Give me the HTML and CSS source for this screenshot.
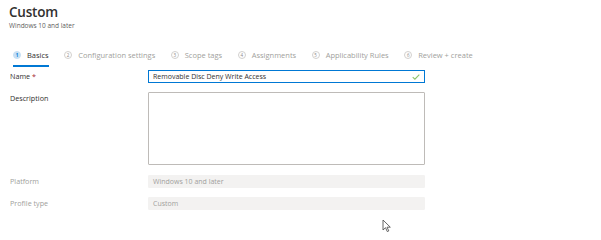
FILE: index.html
```html
<!DOCTYPE html>
<html lang="en">
<head>
    <meta charset="UTF-8">
    <title>Custom</title>
    <link rel="stylesheet" href="styles.css">
</head>
<body>

<div class="page">
    <div class="header">
        <h1 class="title">Custom</h1>
        <div class="subtitle">Windows 10 and later</div>
    </div>

    <!-- Wizard steps -->
    <div class="steps">
        <div class="step active"><span class="num">1</span><span class="label">Basics</span></div>
        <div class="step"><span class="num">2</span><span class="label">Configuration settings</span></div>
        <div class="step"><span class="num">3</span><span class="label">Scope tags</span></div>
        <div class="step"><span class="num">4</span><span class="label">Assignments</span></div>
        <div class="step"><span class="num">5</span><span class="label">Applicability Rules</span></div>
        <div class="step"><span class="num">6</span><span class="label">Review + create</span></div>
    </div>

    <div class="form">
        <div class="row">
            <div class="field-label">Name <span class="req">*</span></div>
            <div class="input focused">
                <span>Removable Disc Deny Write Access</span>
                <svg class="check" width="8" height="6" viewBox="0 0 8 6"><path d="M0.7 3.2 L2.9 5.2 L7.3 0.7" fill="none" stroke="#8cc46a" stroke-width="1.1"/></svg>
            </div>
        </div>
        <div class="row">
            <div class="field-label">Description</div>
            <div class="textarea"></div>
        </div>
        <div class="row readonly">
            <div class="field-label">Platform</div>
            <div class="input disabled">Windows 10 and later</div>
        </div>
        <div class="row readonly">
            <div class="field-label">Profile type</div>
            <div class="input disabled">Custom</div>
        </div>
    </div>
</div>

<!-- mouse pointer -->
<svg class="pointer" width="10" height="14" viewBox="0 0 10 14">
    <path d="M1 1 L1 11 L3.5 8.7 L5.3 12.6 L6.8 11.9 L5 8.2 L8.3 8.2 Z" fill="#fff" stroke="#555" stroke-width="0.9" stroke-linejoin="round"/>
</svg>

</body>
</html>
```

FILE: styles.css
```css
body {
    margin: 0;
    background: #fff;
    font-family: "Open Sans", "Noto Sans", sans-serif;
    color: #323130;
}
.page {
    padding: 4px 0 0 9px;
}
.title {
    margin: 0;
    font-size: 13.5px;
    font-weight: 600;
    letter-spacing: -0.2px;
    line-height: 17px;
}
.subtitle {
    font-size: 6.5px;
    line-height: 8px;
    color: #605e5c;
    margin-top: 1px;
}

/* Steps */
.steps {
    display: flex;
    margin-top: 20px;
    padding-left: 4px;
    gap: 15.5px;
}
.step {
    display: flex;
    align-items: center;
    gap: 6px;
    font-size: 7.5px;
    line-height: 10px;
    color: #a19f9d;
    padding-bottom: 5px;
    border-bottom: 2px solid transparent;
}
.step.active {
    color: #323130;
    border-bottom-color: #0078d4;
}
.num {
    width: 8px;
    height: 8px;
    border-radius: 50%;
    border: 1px solid #d2d0ce;
    box-sizing: border-box;
    display: flex;
    align-items: center;
    justify-content: center;
    font-size: 4.5px;
    color: #8a8886;
}
.step.active .num {
    border-color: #c7e0f4;
    background: #c7e0f4;
    color: #0078d4;
    font-weight: 700;
}

/* Form */
.form {
    margin-top: 3px;
    padding-left: 1px;
    display: flex;
    flex-direction: column;
    gap: 9px;
}
.row {
    display: grid;
    grid-template-columns: 138px 277px;
    align-items: start;
}
.field-label {
    font-size: 7.2px;
    line-height: 13px;
}
.req {
    color: #a4262c;
}
.readonly .field-label {
    color: #a19f9d;
}
.input {
    height: 13px;
    box-sizing: border-box;
    border: 1px solid #c8c6c4;
    display: flex;
    align-items: center;
    justify-content: space-between;
    padding: 0 4px;
    font-size: 7px;
    color: #323130;
}
.input.focused {
    border: 1px solid #0078d4;
}
.textarea {
    height: 73px;
    border: 1px solid #bebbb8;
    border-radius: 1px;
    box-sizing: border-box;
}
.input.disabled {
    border-color: #f3f2f1;
    background: #f3f2f1;
    color: #a19f9d;
    border-radius: 1px;
}
.form .row:nth-child(3) {
    margin-top: 1px;
}

.pointer {
    position: absolute;
    left: 382px;
    top: 219px;
}
```
